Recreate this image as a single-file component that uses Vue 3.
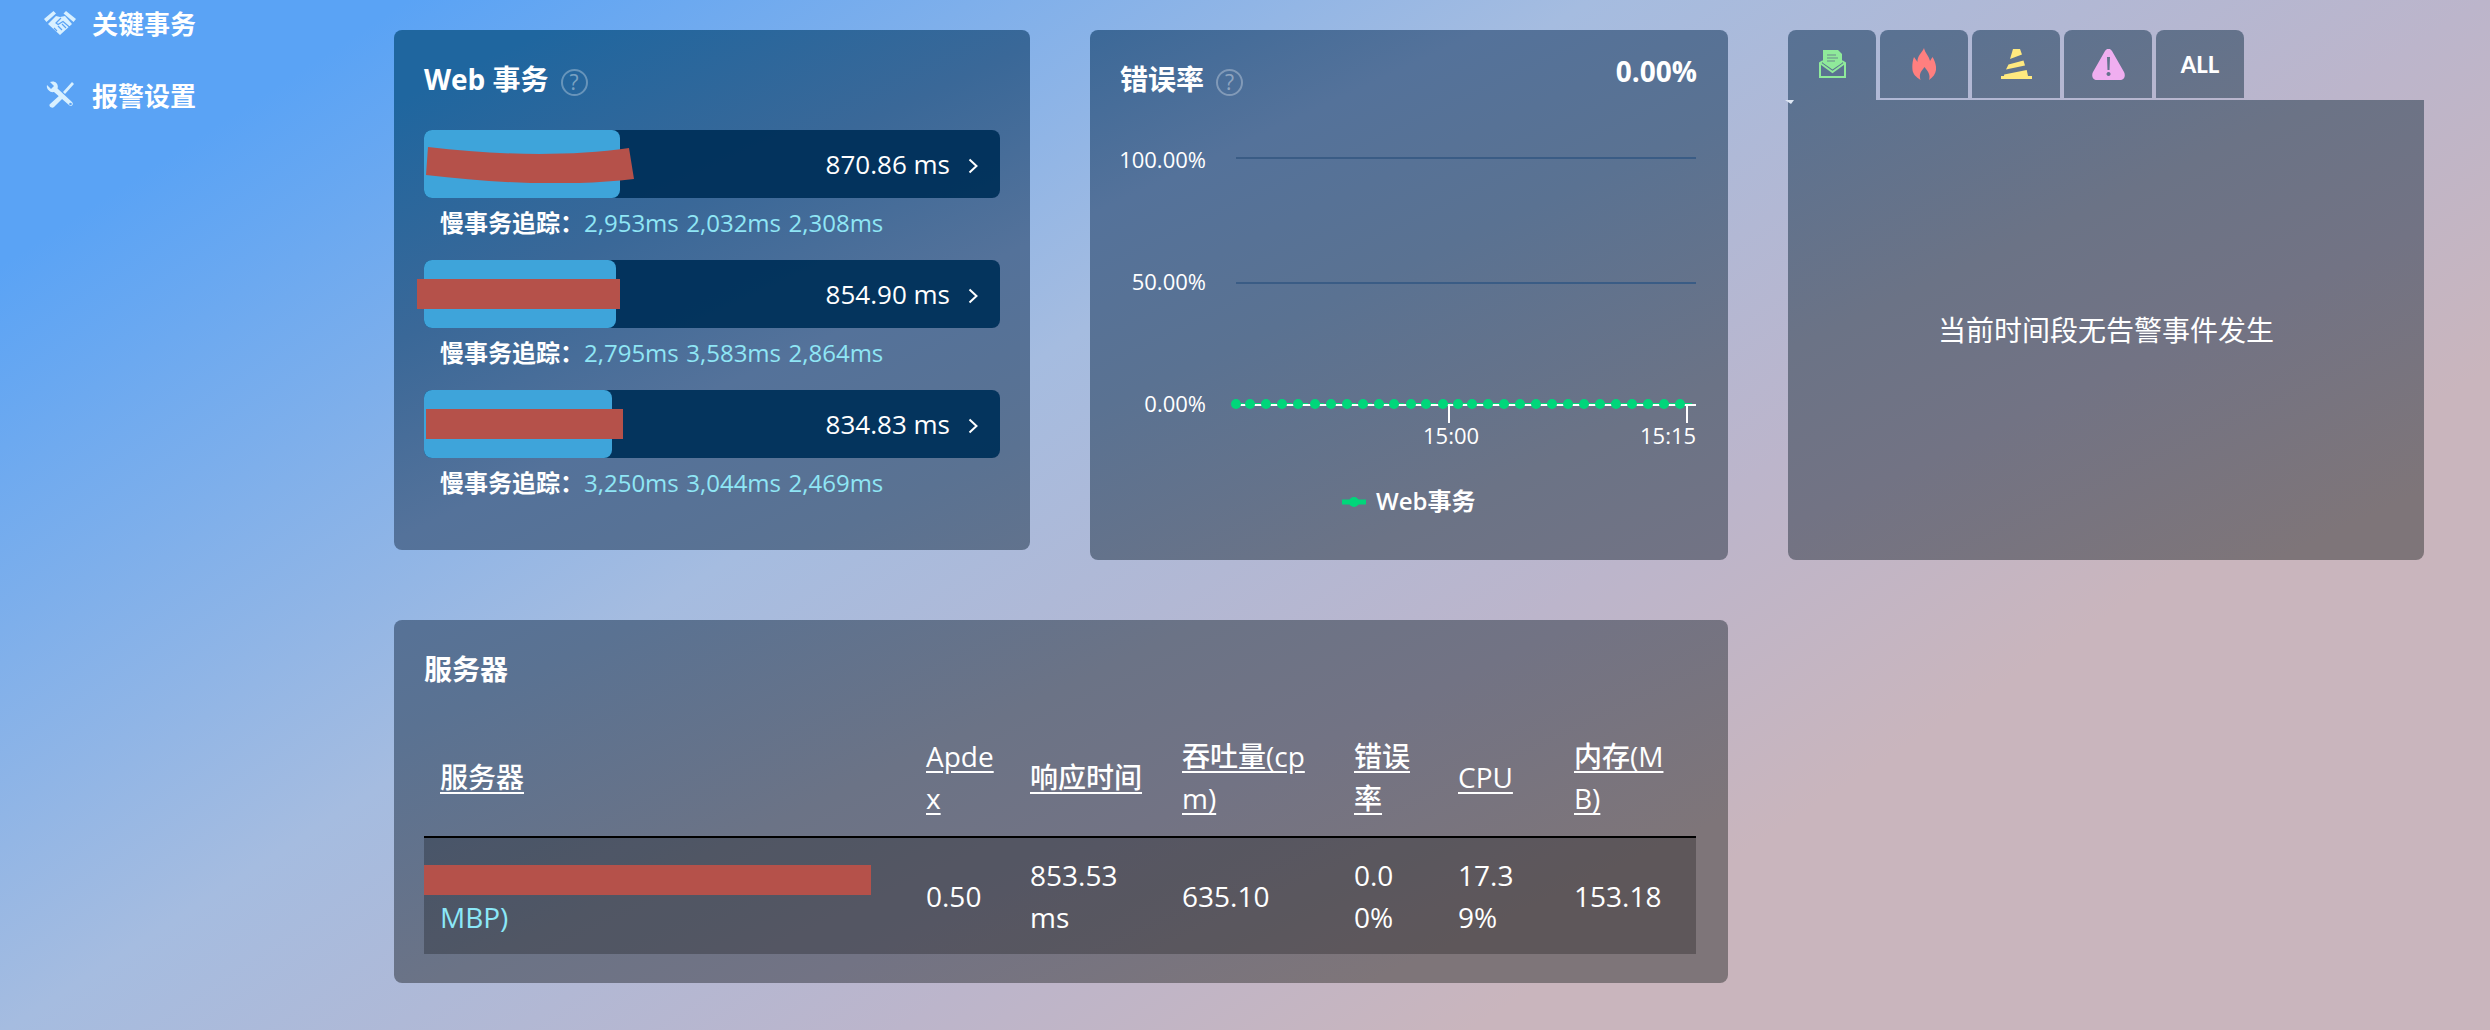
<template>
  <div class="page">
    <aside class="sidebar">
      <a class="nav-item">
        <svg class="nav-icon" viewBox="0 0 32 26">
          <path d="M0 9 9.500 1 12 3.500 2.500 12zM32 9 22 1l-2.500 2.500L29.500 12z" />
          <path d="M4 14 12 6l4 1 5-1 7 8-12 11z" />
          <path class="nav-cut" d="M17 8l-5 5 2 1.500 5-3 7 6M10 18l3 3M14 16l4 4M18 14l4 4" />
        </svg>
        <span>关键事务</span>
      </a>
      <a class="nav-item">
        <svg class="nav-icon" viewBox="0 0 28 28">
          <path d="M1 4 5 8l3-3-4-4c5-2 9 2 7.500 6.500L26 21c2 2 0 5-2.500 3.500L8 11C4 12 0 8 1 4z" />
          <path d="M26 1l2 2-9 10-2-2zM14 14l3 3-9 9c-2 2-6-1-4-3z" />
          <circle class="nav-hole" cx="24.500" cy="23" r="1.300" />
        </svg>
        <span>报警设置</span>
      </a>
    </aside>

    <main class="content">
      <section class="card web-card">
        <div class="card-head">
          <h3>Web 事务</h3>
          <span class="help">?</span>
        </div>
        <div v-for="row in transactions" :key="row.time" class="trans">
          <div class="bar">
            <div class="bar-fill" :style="{ width: row.fill + 'px' }"></div>
            <span class="bar-time">{{ row.time }}</span>
            <svg class="chevron" viewBox="0 0 10 16"><path d="M1.500 1.500 8.500 8l-7 6.500" /></svg>
            <svg v-if="row.curved" class="mark mark-curved" viewBox="0 0 208 36">
              <path d="M2 0C70 8 140 10 203 1L208 32C140 40 70 36 0 28z" />
            </svg>
            <div v-else class="mark" :class="row.markClass"></div>
          </div>
          <div class="trace">
            <span class="trace-label">慢事务追踪：</span>
            <a v-for="t in row.traces" :key="t">{{ t }}</a>
          </div>
        </div>
      </section>

      <section class="card error-card">
        <div class="card-head">
          <h3>错误率</h3>
          <span class="help">?</span>
          <span class="head-value">0.00%</span>
        </div>
        <svg class="chart" width="577" height="400" viewBox="0 0 577 400">
          <line class="grid" x1="116" x2="576" y1="28" y2="28" />
          <line class="grid" x1="116" x2="576" y1="153" y2="153" />
          <text class="tick-y" x="86" y="38">100.00%</text>
          <text class="tick-y" x="86" y="160">50.00%</text>
          <text class="tick-y" x="86" y="282">0.00%</text>
          <line class="axis" x1="116" x2="576" y1="275" y2="275" />
          <line class="axis" x1="329" x2="329" y1="275" y2="293" />
          <line class="axis" x1="567" x2="567" y1="275" y2="293" />
          <line class="series" x1="116" x2="576" y1="273.500" y2="273.500" />
          <circle v-for="x in dots" :key="x" class="dot" :cx="x" cy="274" r="5" />
          <text class="tick-x" x="303" y="314">15:00</text>
          <text class="tick-x" x="520" y="314">15:15</text>
          <line class="series-key" x1="222" x2="246" y1="372" y2="372" />
          <circle class="dot" cx="234" cy="372" r="5" />
          <text class="legend" x="256" y="380">Web事务</text>
        </svg>
      </section>

      <section class="alerts">
        <div class="tabs">
          <div class="tab active">
            <svg width="27" height="28" viewBox="0 0 27 28">
              <path fill="#8fea9a" d="M4 0h15l4 4v9l-9.500 6.500L4 13z" />
              <path stroke="#6a8a8c" stroke-width="1.200" d="M8 5h9M8 8h11M8 11h8" fill="none" />
              <path fill="none" stroke="#8fea9a" stroke-width="2" d="M4 11 1 13v14h25V13l-3-2" />
              <path fill="none" stroke="#8fea9a" stroke-width="2" d="M1 13l12.500 9L26 13" />
            </svg>
          </div>
          <div class="tab">
            <svg width="24" height="32" viewBox="0 0 24 32">
              <path fill="#ff7f7f" d="M12 0c1 5 5 8 6 13l2.500-4c2.500 4 4 9 3.500 13-.5 4-3 7-7 10 1-3 .5-6-1.500-9l-3-4-3 4c-2 3-2 6-1 9C4 29 1 26 .5 22 0 18 .5 13 2 9l3.500 5C5 8 10 5 12 0z" />
            </svg>
          </div>
          <div class="tab">
            <svg width="31" height="30" viewBox="0 0 31 30">
              <path fill="#ffe97f" d="M12 0h7l2 5.500L9 10z" />
              <path fill="#ffe97f" d="M7.500 15.500 22.500 11.500 24 16.500 5 20.500z" />
              <path fill="#ffe97f" d="M3.200 25.500 25.700 21 27 27h4v3H0v-3h3z" />
            </svg>
          </div>
          <div class="tab">
            <svg width="33" height="31" viewBox="0 0 33 31">
              <path fill="#f0aef0" fill-rule="evenodd" d="M13 2c2-3 5-3 7 0l12 21c2 4 0 8-4 8H5c-4 0-6-4-4-8zM15 8l.5 13h2L18 8zM16.500 23a2 2 0 1 0 .1 0z" />
            </svg>
          </div>
          <div class="tab all">ALL</div>
        </div>
        <div class="alert-panel">
          <p>当前时间段无告警事件发生</p>
        </div>
      </section>

      <section class="card server-card">
        <h3>服务器</h3>
        <table>
          <colgroup>
            <col v-for="w in colWidths" :key="w.key" :style="{ width: w.value + 'px' }" />
          </colgroup>
          <thead>
            <tr>
              <th v-for="h in headers" :key="h"><u>{{ h }}</u></th>
            </tr>
          </thead>
          <tbody>
            <tr>
              <td class="host">
                <span class="host-line"></span>
                <a>MBP)</a>
                <div class="mark mark-host"></div>
              </td>
              <td>0.50</td>
              <td>853.53 ms</td>
              <td>635.10</td>
              <td>0.00%</td>
              <td>17.39%</td>
              <td>153.18</td>
            </tr>
          </tbody>
        </table>
      </section>
    </main>
  </div>
</template>

<script setup>
const transactions = [
  { time: '870.86 ms', fill: 196, curved: true, traces: ['2,953ms', '2,032ms', '2,308ms'] },
  { time: '854.90 ms', fill: 192, markClass: 'mark-two', traces: ['2,795ms', '3,583ms', '2,864ms'] },
  { time: '834.83 ms', fill: 188, markClass: 'mark-three', traces: ['3,250ms', '3,044ms', '2,469ms'] }
]

const dots = [116, 130, 146, 162, 178, 195, 211, 227, 243, 259, 274, 291, 306, 323, 338, 352, 368, 384, 400, 416, 432, 448, 464, 480, 496, 512, 528, 544, 560]

const headers = ['服务器', 'Apdex', '响应时间', '吞吐量(cpm)', '错误率', 'CPU', '内存(MB)']

const colWidths = [486, 104, 152, 172, 104, 116, 138].map((value, key) => ({ key, value }))
</script>

<style>
body {
  margin: 0;
}
</style>

<style scoped>
.page {
  display: flex;
  width: 2490px;
  height: 1030px;
  overflow: hidden;
  color: #fff;
  font-family: "Open Sans", "Noto Sans CJK SC", sans-serif;
  background: linear-gradient(147deg, #5aa3f5 10%, #a5bce0 39%, #bcb5cb 61%, #c9b5bd 75%) fixed;
}

.sidebar {
  width: 394px;
  flex: none;
  display: flex;
  flex-direction: column;
  gap: 26px;
}

.nav-item {
  display: flex;
  align-items: center;
  height: 46px;
  padding-left: 44px;
  font-size: 26px;
  font-weight: 700;
}

.nav-icon {
  width: 32px;
  height: 26px;
  margin-right: 16px;
  fill: #d8f0ff;
}

.nav-item:last-child .nav-icon {
  height: 28px;
}

.nav-cut {
  fill: none;
  stroke: #5aa3f5;
  stroke-width: 1.200;
}

.nav-hole {
  fill: #5aa3f5;
}

.content {
  display: grid;
  grid-template-columns: 636px 638px 636px;
  grid-template-rows: 530px auto;
  column-gap: 60px;
  row-gap: 60px;
  align-items: start;
  padding-top: 30px;
}

.card,
.tab,
.alert-panel {
  background: linear-gradient(155deg, #1f669f 13%, #3a6898 24%, #54729a 33%, #5a7292 42%, #6b7386 54%, #727384 62%, #7e7579 74%) fixed;
}

.card {
  border-radius: 8px;
  box-sizing: border-box;
  padding: 30px;
}

.web-card {
  height: 520px;
}

.error-card {
  height: 530px;
  padding-right: 31px;
}

.card-head {
  display: flex;
  align-items: center;
  height: 40px;
  margin-top: -1px;
  margin-bottom: 31px;
  position: relative;
}

h3 {
  margin: 0;
  font-size: 28px;
  font-weight: 700;
  line-height: 40px;
}

.help {
  width: 23px;
  height: 23px;
  margin: 6px 0 0 12px;
  border: 2px solid rgba(255, 255, 255, 0.3);
  border-radius: 50%;
  color: rgba(255, 255, 255, 0.4);
  font-size: 21px;
  line-height: 23px;
  text-align: center;
}

.head-value {
  margin-left: auto;
  margin-top: -16px;
  font-size: 28px;
  font-weight: 700;
}

.trans {
  height: 130px;
}

.bar {
  position: relative;
  display: flex;
  align-items: center;
  justify-content: flex-end;
  height: 68px;
  padding-right: 22px;
  box-sizing: border-box;
  background: rgba(0, 48, 90, 0.95);
  border-radius: 8px;
}

.bar-fill {
  position: absolute;
  left: 0;
  top: 0;
  bottom: 0;
  background: #3ea4da;
  border-radius: 8px;
}

.bar-time {
  position: relative;
  font-size: 26px;
  font-weight: 500;
}

.chevron {
  width: 10px;
  height: 16px;
  margin-left: 18px;
  margin-top: 3px;
  fill: none;
  stroke: #fff;
  stroke-width: 2;
}

.mark {
  position: absolute;
  background: #b5514a;
}

.mark-curved {
  left: 2px;
  top: 17px;
  width: 208px;
  height: 36px;
  fill: #b5514a;
  background: none;
}

.mark-two {
  left: -7px;
  top: 19px;
  width: 203px;
  height: 30px;
}

.mark-three {
  left: 2px;
  top: 19px;
  width: 197px;
  height: 30px;
}

.trace {
  display: flex;
  gap: 7.500px;
  padding: 8px 0 0 16px;
  font-size: 24px;
  line-height: 34px;
}

.trace-label {
  font-weight: 600;
  margin-right: -7.500px;
}

.trace a {
  color: #8fe6f5;
}

.chart {
  display: block;
}

.grid {
  stroke: #3a5c85;
  stroke-width: 2;
}

.axis {
  stroke: #fff;
  stroke-width: 2;
}

.series {
  stroke: #00d67a;
  stroke-width: 1;
  stroke-dasharray: 8 8;
}

.series-key {
  stroke: #00d67a;
  stroke-width: 5;
}

.dot {
  fill: #00d67a;
}

.tick-y,
.tick-x {
  fill: #fff;
  font-size: 22px;
}

.tick-y {
  text-anchor: end;
}

.legend {
  fill: #fff;
  font-size: 24px;
  font-weight: 600;
}

.alerts {
  width: 636px;
  position: relative;
}

.tabs {
  display: flex;
  gap: 4px;
  height: 70px;
}

.tab {
  display: flex;
  align-items: center;
  justify-content: center;
  width: 88px;
  height: 68px;
  box-sizing: border-box;
  border-radius: 8px 8px 0 0;
}

.tab.active {
  height: 70px;
  padding-bottom: 2px;
}

.tab.all {
  font-family: Lato, sans-serif;
  font-size: 22px;
  font-weight: 900;
}

.alert-panel {
  display: flex;
  align-items: center;
  justify-content: center;
  height: 460px;
  box-sizing: border-box;
  border-radius: 0 0 8px 8px;
}

.alert-panel::before {
  content: "";
  position: absolute;
  left: -3px;
  top: 70px;
  border-top: 4px solid #dfe7f4;
  border-left: 6px solid transparent;
  border-right: 3px solid transparent;
}

.alert-panel p {
  margin: 0;
  font-size: 28px;
  line-height: 40px;
}

.server-card {
  grid-column: 1 / 3;
  height: 363px;
}

.server-card h3 {
  margin-top: -1px;
}

table {
  width: 1272px;
  margin-top: 38px;
  table-layout: fixed;
  border-collapse: collapse;
  font-size: 28px;
  line-height: 42px;
}

th {
  padding: 8px 16px 17px;
  text-align: left;
  font-weight: 500;
  word-break: break-all;
  border-bottom: 2px solid #000;
}

u {
  text-underline-offset: 4px;
}

td {
  padding: 16px;
  font-weight: 500;
  word-break: break-all;
  vertical-align: middle;
  background: rgba(0, 0, 0, 0.25);
}

td.host {
  position: relative;
}

.host-line {
  display: block;
  height: 42px;
}

.host a {
  color: #8be8f8;
}

.mark-host {
  left: 0;
  top: 27px;
  width: 447px;
  height: 30px;
}
</style>
